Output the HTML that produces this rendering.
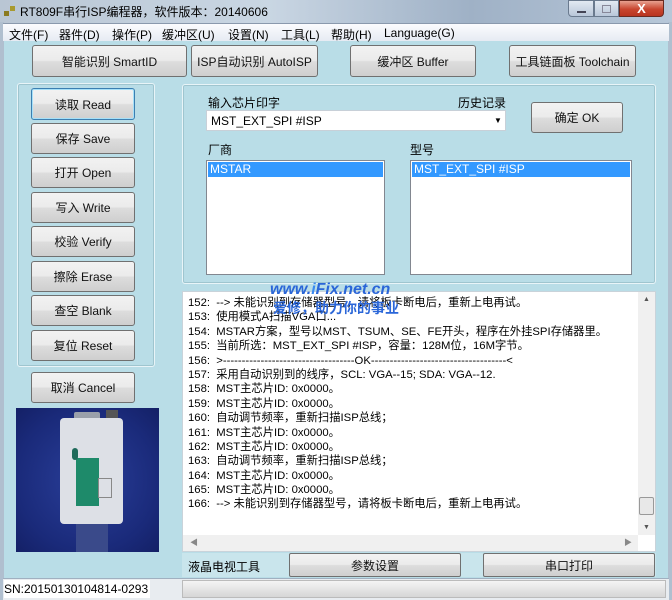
<!DOCTYPE html>
<html><head><meta charset="utf-8"><style>
*{margin:0;padding:0;box-sizing:border-box}
body{width:672px;height:600px;overflow:hidden;position:relative;font-family:"Liberation Sans","Noto Sans CJK SC",sans-serif;font-size:12px;color:#000;background:#b9dde7}
.a{position:absolute}
.btn{position:absolute;border:1px solid #707070;border-radius:3px;background:linear-gradient(#f2f2f2 0%,#ebebeb 48%,#dddddd 52%,#cfcfcf 100%);display:flex;align-items:center;justify-content:center;font-size:12px;color:#111}
.list{position:absolute;background:#fff;border:1px solid #828790}
.sel{background:#3399ff;color:#fff;height:15px;line-height:15px;padding-left:2px;margin:1px;font-size:12px}
.grp{position:absolute;border:1px solid #e8f4f8;border-radius:3px;box-shadow:inset 0 0 0 1px #9fc5cf}
.log div{height:14.4px;line-height:14.4px;white-space:nowrap;font-size:11.3px}
.m{position:absolute;top:26px;font-size:12px}
</style></head><body>
<div class="a" style="left:0;top:0;width:672px;height:23px;background:linear-gradient(90deg,#b9c6d4,#c9d6e3 40%,#9fb1c6 70%,#b7c7d8)"></div>
<div class="a" style="left:4px;top:5px;width:12px;height:12px">
<div class="a" style="left:0;top:6px;width:5px;height:5px;background:#8a7a20"></div>
<div class="a" style="left:6px;top:1px;width:5px;height:5px;background:#a89a30"></div></div>
<div class="a" style="left:20px;top:3px;font-size:12px;color:#000">RT809F串行ISP编程器，软件版本：20140606</div>
<div class="a" style="left:568px;top:0;width:26px;height:17px;border:1px solid #6a7a8e;border-radius:0 0 0 4px;background:linear-gradient(#e2e9f2,#b9c7d9)"><div class="a" style="left:8px;top:10px;width:9px;height:2px;background:#fff;border:1px solid #445"></div></div>
<div class="a" style="left:594px;top:0;width:25px;height:17px;border:1px solid #6a7a8e;background:linear-gradient(#e2e9f2,#b9c7d9)"><div class="a" style="left:7px;top:4px;width:9px;height:8px;border:1px solid #889"></div></div>
<div class="a" style="left:619px;top:0;width:45px;height:17px;border:1px solid #6a2a20;border-radius:0 0 4px 0;background:linear-gradient(#e8a090,#c8452e 55%,#b83420);color:#fff;font-weight:bold;text-align:center;line-height:15px;font-size:13px">X</div>
<div class="a" style="left:0;top:22px;width:4px;height:578px;background:#b0bfcf"></div>
<div class="a" style="left:668px;top:22px;width:4px;height:578px;background:#b0bfcf"></div>
<div class="a" style="left:3px;top:23px;width:666px;height:18px;background:linear-gradient(#fbfcfe,#e6ebf3);border-top:1px solid #8a99ad"></div>
<div class="m" style="left:9px">文件(F)</div>
<div class="m" style="left:59px">器件(D)</div>
<div class="m" style="left:112px">操作(P)</div>
<div class="m" style="left:162px">缓冲区(U)</div>
<div class="m" style="left:228px">设置(N)</div>
<div class="m" style="left:281px">工具(L)</div>
<div class="m" style="left:331px">帮助(H)</div>
<div class="m" style="left:384px">Language(G)</div>
<div class="btn" style="left:32px;top:45px;width:155px;height:32px">智能识别 SmartID</div>
<div class="btn" style="left:191px;top:45px;width:127px;height:32px">ISP自动识别 AutoISP</div>
<div class="btn" style="left:350px;top:45px;width:126px;height:32px">缓冲区 Buffer</div>
<div class="btn" style="left:509px;top:45px;width:127px;height:32px">工具链面板 Toolchain</div>
<div class="grp" style="left:17px;top:83px;width:138px;height:284px"></div>
<div class="btn" style="left:31px;top:88px;width:104px;height:32px;border-color:#3c7fb1;box-shadow:inset 0 0 0 1px #a6e0f8">读取 Read</div>
<div class="btn" style="left:31px;top:123px;width:104px;height:31px">保存 Save</div>
<div class="btn" style="left:31px;top:157px;width:104px;height:31px">打开 Open</div>
<div class="btn" style="left:31px;top:192px;width:104px;height:31px">写入 Write</div>
<div class="btn" style="left:31px;top:226px;width:104px;height:31px">校验 Verify</div>
<div class="btn" style="left:31px;top:261px;width:104px;height:31px">擦除 Erase</div>
<div class="btn" style="left:31px;top:295px;width:104px;height:31px">查空 Blank</div>
<div class="btn" style="left:31px;top:330px;width:104px;height:31px">复位 Reset</div>
<div class="btn" style="left:31px;top:372px;width:104px;height:31px">取消 Cancel</div>
<div class="a" style="left:16px;top:408px;width:143px;height:144px;background:radial-gradient(circle at 50% 50%,#2a3f9a,#1a2a7a 70%,#142066)">
<div class="a" style="left:58px;top:4px;width:26px;height:12px;background:#9aa0aa;border-radius:2px"></div>
<div class="a" style="left:90px;top:2px;width:12px;height:14px;background:#555"></div>
<div class="a" style="left:44px;top:10px;width:63px;height:106px;background:#dde0e6;border-radius:4px"></div>
<div class="a" style="left:60px;top:50px;width:23px;height:48px;background:#1e8a6a"></div>
<div class="a" style="left:56px;top:40px;width:6px;height:12px;background:#1e6a5a;border-radius:3px"></div>
<div class="a" style="left:82px;top:70px;width:14px;height:20px;border:1px solid #888"></div>
<div class="a" style="left:60px;top:116px;width:32px;height:28px;background:#3a4a8a"></div>
</div>
<div class="grp" style="left:182px;top:84px;width:474px;height:200px"></div>
<div class="a" style="left:208px;top:94px">输入芯片印字</div>
<div class="a" style="left:458px;top:94px">历史记录</div>
<div class="a" style="left:206px;top:110px;width:300px;height:21px;background:#fff;border:1px solid #c8d0d8"><span class="a" style="left:4px;top:3px">MST_EXT_SPI #ISP</span><span class="a" style="left:287px;top:5px;font-size:8px">▼</span></div>
<div class="btn" style="left:531px;top:102px;width:92px;height:31px">确定 OK</div>
<div class="a" style="left:208px;top:141px">厂商</div>
<div class="a" style="left:410px;top:141px">型号</div>
<div class="list" style="left:206px;top:160px;width:179px;height:115px"><div class="sel">MSTAR</div></div>
<div class="list" style="left:410px;top:160px;width:222px;height:115px"><div class="sel">MST_EXT_SPI #ISP</div></div>
<div class="a" style="left:182px;top:291px;width:474px;height:261px;background:#fff;border:1px solid #c9d3da"></div>
<div class="a log" style="left:188px;top:296px">
<div>152:&nbsp; --&gt; 未能识别到存储器型号，请将板卡断电后，重新上电再试。</div>
<div>153:&nbsp; 使用模式A扫描VGA口...</div>
<div>154:&nbsp; MSTAR方案，型号以MST、TSUM、SE、FE开头，程序在外挂SPI存储器里。</div>
<div>155:&nbsp; 当前所选：MST_EXT_SPI #ISP，容量：128M位，16M字节。</div>
<div>156:&nbsp; &gt;-----------------------------------OK------------------------------------&lt;</div>
<div>157:&nbsp; 采用自动识别到的线序，SCL: VGA--15; SDA: VGA--12.</div>
<div>158:&nbsp; MST主芯片ID: 0x0000。</div>
<div>159:&nbsp; MST主芯片ID: 0x0000。</div>
<div>160:&nbsp; 自动调节频率，重新扫描ISP总线；</div>
<div>161:&nbsp; MST主芯片ID: 0x0000。</div>
<div>162:&nbsp; MST主芯片ID: 0x0000。</div>
<div>163:&nbsp; 自动调节频率，重新扫描ISP总线；</div>
<div>164:&nbsp; MST主芯片ID: 0x0000。</div>
<div>165:&nbsp; MST主芯片ID: 0x0000。</div>
<div>166:&nbsp; --&gt; 未能识别到存储器型号，请将板卡断电后，重新上电再试。</div>
</div>
<div class="a" style="left:638px;top:292px;width:17px;height:243px;background:#f0f0f0"><span class="a" style="left:5px;top:4px;font-size:7px;color:#555">▲</span><div class="a" style="left:1px;top:205px;width:15px;height:18px;border:1px solid #999;border-radius:2px;background:#e8e8e8"></div><span class="a" style="left:5px;top:232px;font-size:7px;color:#555">▼</span></div>
<div class="a" style="left:183px;top:535px;width:455px;height:16px;background:#f0f0f0"><span class="a" style="left:7px;top:2px;font-size:8px;color:#888">◀</span><span class="a" style="left:441px;top:2px;font-size:8px;color:#888">▶</span></div>
<div class="a" style="left:270px;top:281px;font-style:italic;font-weight:bold;color:#2a66d8;font-size:16px">www.<span style="color:#3a8af0">i</span>Fix.net.cn</div>
<div class="a" style="left:273px;top:298px;font-weight:bold;color:#2a66d8;font-size:14px">爱修，助力你的事业</div>
<div class="a" style="left:182px;top:553px;width:474px;height:24px;background:#c9e5ec"></div>
<div class="a" style="left:188px;top:558px;font-size:12px">液晶电视工具</div>
<div class="btn" style="left:289px;top:553px;width:172px;height:24px;border-radius:2px">参数设置</div>
<div class="btn" style="left:483px;top:553px;width:172px;height:24px;border-radius:2px">串口打印</div>
<div class="a" style="left:3px;top:578px;width:666px;height:22px;background:#e8ecf0;border-top:1px solid #a0b0c0"></div>
<div class="a" style="left:4px;top:580px;width:146px;height:18px;background:#fff;overflow:hidden;white-space:nowrap;line-height:18px;font-size:12px">SN:20150130104814-0293</div>
<div class="a" style="left:182px;top:580px;width:484px;height:18px;background:linear-gradient(#f4f4f4,#d6d6d6);border:1px solid #bbb"></div>
</body></html>
